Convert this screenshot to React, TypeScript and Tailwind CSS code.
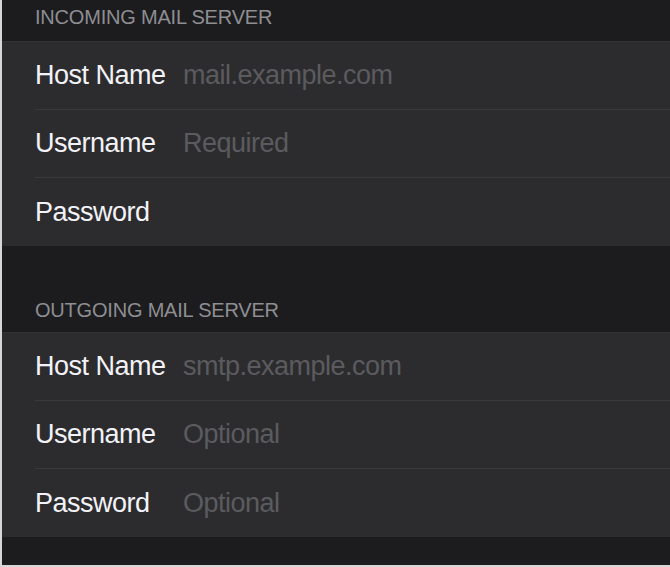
import React from "react";

type Field = { label: string; placeholder?: string };

const incoming: Field[] = [
  { label: "Host Name", placeholder: "mail.example.com" },
  { label: "Username", placeholder: "Required" },
  { label: "Password" },
];

const outgoing: Field[] = [
  { label: "Host Name", placeholder: "smtp.example.com" },
  { label: "Username", placeholder: "Optional" },
  { label: "Password", placeholder: "Optional" },
];

function FieldGroup({ fields }: { fields: Field[] }) {
  return (
    <div className="bg-[#2c2c2e] border-t border-[#333335]">
      {fields.map((f, i) => (
        <div key={f.label} className="pl-[33px]">
          <div
            className={
              "h-[68px] flex items-center " +
              (i < fields.length - 1 ? "border-b border-[#3a3a3c]" : "")
            }
          >
            <span className="w-[148px] shrink-0 text-[27px] tracking-[-0.5px] text-[#f2f2f7]">
              {f.label}
            </span>
            {f.placeholder && (
              <span className="text-[27px] tracking-[-0.5px] text-[#5b5b5f]">
                {f.placeholder}
              </span>
            )}
          </div>
        </div>
      ))}
    </div>
  );
}

export default function App() {
  return (
    <div
      className="w-[670px] h-[567px] overflow-hidden bg-[#1c1c1e] border-l-2 border-b-2 border-[#d6d6d6] flex flex-col"
      style={{ fontFamily: '"Liberation Sans", Arial, sans-serif' }}
    >
      {/* Incoming */}
      <div className="h-[41px] pt-[5px] pl-[33px] text-[20px] leading-[24px] tracking-[-0.2px] text-[#8e8e93]">
        INCOMING MAIL SERVER
      </div>
      <FieldGroup fields={incoming} />

      {/* Outgoing */}
      <div className="h-[86px] flex items-end pb-[10px] pl-[33px] text-[20px] leading-[24px] tracking-[-0.2px] text-[#8e8e93]">
        OUTGOING MAIL SERVER
      </div>
      <FieldGroup fields={outgoing} />

      <div className="flex-1" />
    </div>
  );
}
